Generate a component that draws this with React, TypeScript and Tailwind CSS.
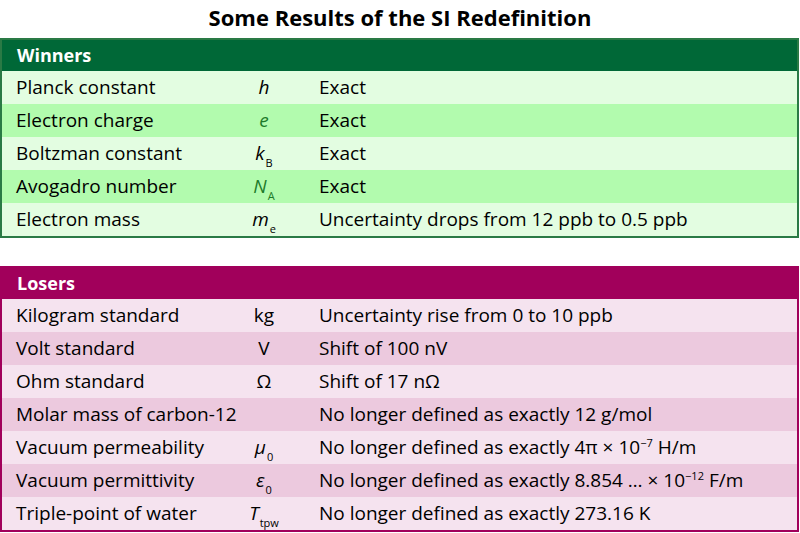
import React from "react";

type Row = { name: string; sym: React.ReactNode; desc: React.ReactNode };

const Sym = ({ b, sub, italic = true, green = false }: { b: string; sub?: string; italic?: boolean; green?: boolean }) => (
  <span className={green ? "text-[#1d7a2a]" : "text-black"}>
    <span className={italic ? "italic" : ""}>{b}</span>
    {sub && <span className="not-italic text-[11px] relative top-[7px] ml-[1px]">{sub}</span>}
  </span>
);

const winners: Row[] = [
  { name: "Planck constant", sym: <Sym b="h" />, desc: "Exact" },
  { name: "Electron charge", sym: <Sym b="e" green />, desc: "Exact" },
  { name: "Boltzman constant", sym: <Sym b="k" sub="B" />, desc: "Exact" },
  { name: "Avogadro number", sym: <Sym b="N" sub="A" green />, desc: "Exact" },
  { name: "Electron mass", sym: <Sym b="m" sub="e" />, desc: "Uncertainty drops from 12 ppb to 0.5 ppb" },
];

const Sup = ({ t }: { t: string }) => <span className="text-[11px] relative -top-[7px]">{t}</span>;

const losers: Row[] = [
  { name: "Kilogram standard", sym: <Sym b="kg" italic={false} />, desc: "Uncertainty rise from 0 to 10 ppb" },
  { name: "Volt standard", sym: <Sym b="V" italic={false} />, desc: "Shift of 100 nV" },
  { name: "Ohm standard", sym: <Sym b="Ω" italic={false} />, desc: "Shift of 17 nΩ" },
  { name: "Molar mass of carbon-12", sym: "", desc: "No longer defined as exactly 12 g/mol" },
  {
    name: "Vacuum permeability",
    sym: <Sym b="μ" sub="0" />,
    desc: (
      <>
        No longer defined as exactly 4π × 10<Sup t="−7" /> H/m
      </>
    ),
  },
  {
    name: "Vacuum permittivity",
    sym: <Sym b="ε" sub="0" />,
    desc: (
      <>
        No longer defined as exactly 8.854 … × 10<Sup t="−12" /> F/m
      </>
    ),
  },
  { name: "Triple-point of water", sym: <Sym b="T" sub="tpw" />, desc: "No longer defined as exactly 273.16 K" },
];

function Box({
  title,
  rows,
  border,
  head,
  light,
  alt,
}: {
  title: string;
  rows: Row[];
  border: string;
  head: string;
  light: string;
  alt: string;
}) {
  return (
    <div className={`border-2 ${border} w-[799px]`}>
      <div className={`${head} h-[31px] flex items-center pl-[15px] text-white font-bold text-[18px]`}>{title}</div>
      {rows.map((r, i) => (
        <div
          key={i}
          className={`${i % 2 === 0 ? light : alt} h-[33px] grid grid-cols-[224px_76px_1fr] items-center text-[19px] text-black whitespace-nowrap`}
        >
          <div className="pl-[14px]">{r.name}</div>
          <div className="text-center">{r.sym}</div>
          <div className="pl-[17px]">{r.desc}</div>
        </div>
      ))}
    </div>
  );
}

export default function App() {
  return (
    <div className="w-[800px] h-[533px] bg-white" style={{ fontFamily: "'Open Sans', sans-serif" }}>
      <div className="h-[38px] flex items-center justify-center pb-[4px] font-bold text-[22px] text-black">
        Some Results of the SI Redefinition
      </div>
      <Box
        title="Winners"
        rows={winners}
        border="border-[#2a7a45]"
        head="bg-[#006837]"
        light="bg-[#e3fde1]"
        alt="bg-[#b2fbae]"
      />
      <div className="h-[28px]" />
      <Box
        title="Losers"
        rows={losers}
        border="border-[#a1005b]"
        head="bg-[#a1005b]"
        light="bg-[#f5e3ef]"
        alt="bg-[#ecc9de]"
      />
    </div>
  );
}
